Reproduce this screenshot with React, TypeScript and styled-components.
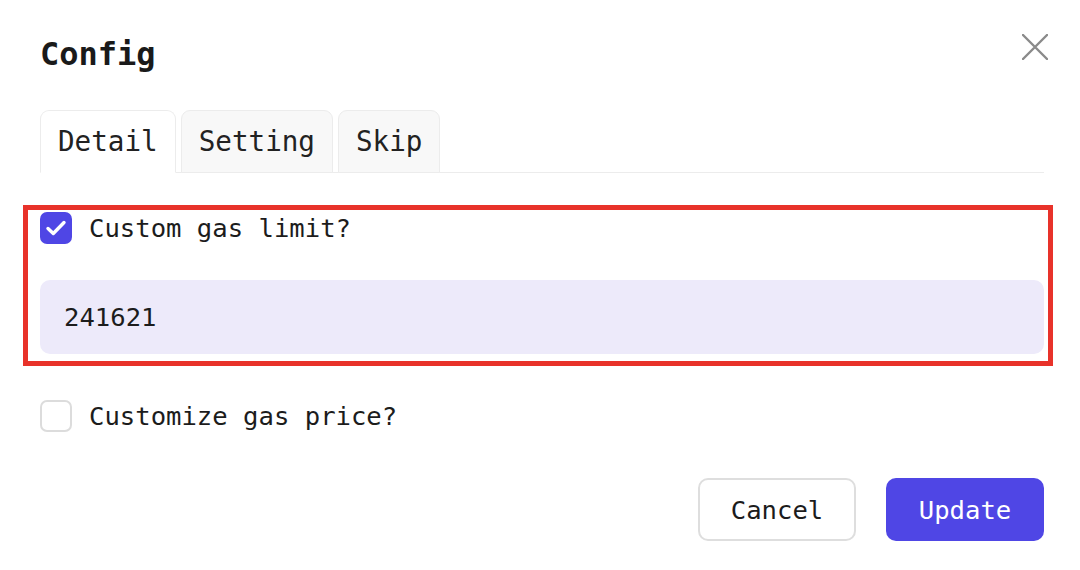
import React, { useState } from 'react';
import styled, { createGlobalStyle } from 'styled-components';

const GlobalStyle = createGlobalStyle`
  * {
    box-sizing: border-box;
  }

  html,
  body {
    margin: 0;
    padding: 0;
    background: #fff;
    font-family: 'DejaVu Sans Mono', 'Liberation Mono', monospace;
    color: #1c1c1c;
  }
`;

const ModalWrap = styled.div`
  width: 1080px;
  height: 570px;
  padding: 34px 36px 0 40px;
  display: flex;
  flex-direction: column;
`;

const Header = styled.div`
  display: flex;
  justify-content: space-between;
  align-items: flex-start;
  height: 40px;
`;

const Title = styled.h2`
  margin: 0;
  font-size: 32px;
  line-height: 40px;
  font-weight: 700;
  color: #1a1a1a;
`;

const CloseButton = styled.button`
  width: 26px;
  height: 26px;
  margin: 0 -4px 0 0;
  padding: 0;
  border: none;
  background: none;
  cursor: pointer;
  display: flex;
  align-items: center;
  justify-content: center;
`;

const TabList = styled.div`
  display: flex;
  gap: 5px;
  margin-top: 36px;
  border-bottom: 1px solid #ececec;
`;

const Tab = styled.button<{ $active?: boolean }>`
  height: 63px;
  margin-bottom: -1px;
  padding: 0 17px;
  font-family: inherit;
  font-size: 27.6px;
  line-height: 62px;
  color: #222;
  background: ${({ $active }) => ($active ? '#fff' : '#f8f8f8')};
  border: 1px solid #ececec;
  border-bottom-color: ${({ $active }) => ($active ? '#fff' : '#ececec')};
  border-radius: 9px 9px 0 0;
  cursor: pointer;
`;

const Body = styled.div`
  display: flex;
  flex-direction: column;
  margin-top: 39px;
`;

const Highlight = styled.div`
  position: relative;
  display: flex;
  flex-direction: column;
  gap: 36px;

  &::after {
    content: '';
    position: absolute;
    top: -7px;
    right: -9px;
    bottom: -12px;
    left: -17px;
    border: 5px solid #e8322a;
    pointer-events: none;
  }
`;

const CheckRow = styled.label<{ $gap?: number }>`
  display: flex;
  align-items: center;
  gap: 17px;
  margin-top: ${({ $gap }) => ($gap ? `${$gap}px` : '0')};
  font-size: 25.6px;
  line-height: 32px;
  cursor: pointer;
`;

const Box = styled.span<{ $checked?: boolean }>`
  width: 32px;
  height: 32px;
  flex: none;
  border-radius: 7px;
  display: flex;
  align-items: center;
  justify-content: center;
  background: ${({ $checked }) => ($checked ? '#4f46e5' : '#fff')};
  border: ${({ $checked }) => ($checked ? 'none' : '2px solid #dcdcdc')};

  svg {
    flex: none;
  }
`;

const GasInput = styled.input`
  width: 100%;
  height: 74px;
  padding: 0 24px;
  border: none;
  border-radius: 10px;
  background: #edeafa;
  font-family: inherit;
  font-size: 25.6px;
  color: #1c1c1c;
  outline: none;
`;

const Footer = styled.div`
  display: flex;
  justify-content: flex-end;
  gap: 30px;
  margin-top: 46px;
`;

const ActionButton = styled.button<{ $primary?: boolean }>`
  width: 158px;
  height: 63px;
  border-radius: 10px;
  font-family: inherit;
  font-size: 25.6px;
  cursor: pointer;
  color: ${({ $primary }) => ($primary ? '#fff' : '#1c1c1c')};
  background: ${({ $primary }) => ($primary ? '#4f46e5' : '#fff')};
  border: ${({ $primary }) => ($primary ? 'none' : '2px solid #dedede')};
`;

const CheckMark = () => (
  <svg width='22' height='22' viewBox='0 0 22 22' fill='none'>
    <path
      d='M3 11.5 L8.3 16.5 L19 5.5'
      stroke='#fff'
      strokeWidth='3.4'
      strokeLinecap='round'
      strokeLinejoin='round'
    />
  </svg>
);

const App = () => {
  const [tab, setTab] = useState('Detail');
  const [customLimit, setCustomLimit] = useState(true);
  const [customPrice, setCustomPrice] = useState(false);
  const [limit, setLimit] = useState('241621');

  return (
    <>
      <GlobalStyle />
      <ModalWrap>
        <Header>
          <Title>Config</Title>
          <CloseButton aria-label='close'>
            <svg width='26' height='26' viewBox='0 0 26 26'>
              <path
                d='M1 1 L25 25 M25 1 L1 25'
                stroke='#8a8a8a'
                strokeWidth='2.4'
                strokeLinecap='round'
              />
            </svg>
          </CloseButton>
        </Header>

        <TabList>
          {['Detail', 'Setting', 'Skip'].map((name) => (
            <Tab key={name} $active={tab === name} onClick={() => setTab(name)}>
              {name}
            </Tab>
          ))}
        </TabList>

        <Body>
          <Highlight>
            <CheckRow onClick={() => setCustomLimit(!customLimit)}>
              <Box $checked={customLimit}>{customLimit && <CheckMark />}</Box>
              Custom gas limit?
            </CheckRow>
            <GasInput value={limit} onChange={(e) => setLimit(e.target.value)} />
          </Highlight>

          <CheckRow $gap={46} onClick={() => setCustomPrice(!customPrice)}>
            <Box $checked={customPrice}>{customPrice && <CheckMark />}</Box>
            Customize gas price?
          </CheckRow>
        </Body>

        <Footer>
          <ActionButton>Cancel</ActionButton>
          <ActionButton $primary>Update</ActionButton>
        </Footer>
      </ModalWrap>
    </>
  );
};

export default App;
